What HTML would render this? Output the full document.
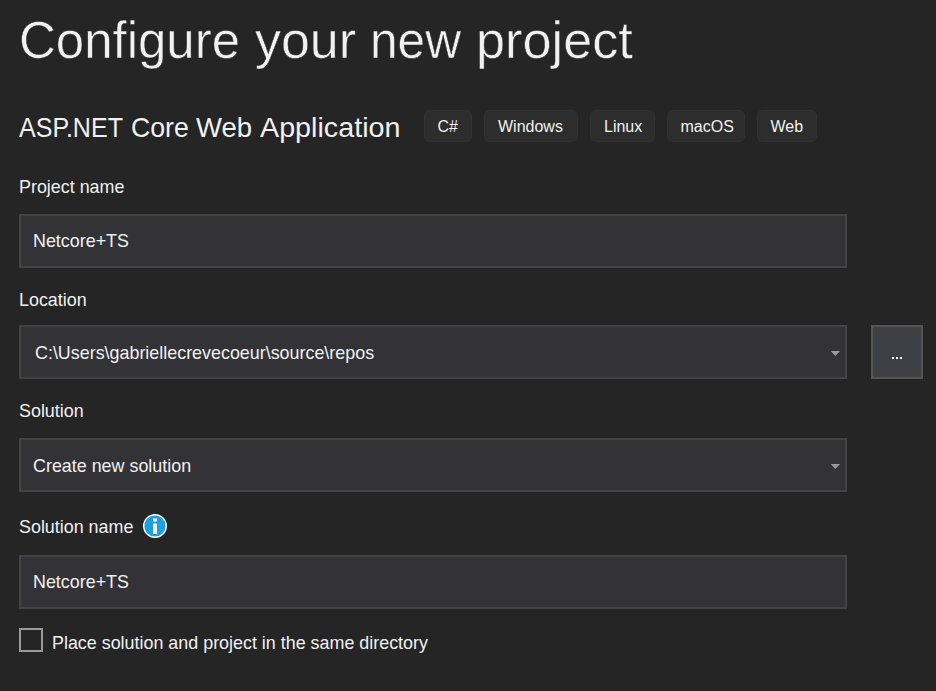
<!DOCTYPE html>
<html><head><meta charset="utf-8">
<style>
html,body{margin:0;padding:0;}
body{width:936px;height:691px;background:#252526;position:relative;overflow:hidden;font-family:"Liberation Sans",sans-serif;color:#f1f1f1;}
.t{position:absolute;white-space:pre;line-height:1;}
.w{transform-origin:0 0;}
.thin{-webkit-text-stroke:0.5px #252526;}
.box{position:absolute;box-sizing:border-box;border:2px solid #434346;background:#333337;}
.tag{position:absolute;top:110px;height:32px;background:#2d2d2d;border-radius:6px;box-shadow:inset 0 0 0 1px #313131;}
.arrow{position:absolute;width:0;height:0;border-left:4.5px solid transparent;border-right:4.5px solid transparent;border-top:5px solid #999999;}
</style></head><body>
<div class="t w thin" style="left:19.02px;top:15px;font-size:51.4px;transform:scaleX(0.992);">Configure</div>
<div class="t w thin" style="left:255px;top:15px;font-size:51.4px;transform:scaleX(1.011);">your</div>
<div class="t w thin" style="left:370.1px;top:15px;font-size:51.4px;transform:scaleX(0.966);">new</div>
<div class="t w thin" style="left:476.35px;top:15px;font-size:51.4px;transform:scaleX(1.017);">project</div>
<div class="t w" style="left:19px;top:113.5px;font-size:27.7px;transform:scaleX(0.9045);">ASP.NET</div>
<div class="t w" style="left:130.54px;top:113.5px;font-size:27.7px;transform:scaleX(0.964);">Core</div>
<div class="t w" style="left:196.4px;top:113.5px;font-size:27.7px;transform:scaleX(0.992);">Web</div>
<div class="t w" style="left:260px;top:113.5px;font-size:27.7px;transform:scaleX(1.037);">Application</div>

<div class="tag" style="left:424px;width:48px;"></div>
<div class="tag" style="left:484px;width:94px;"></div>
<div class="tag" style="left:590px;width:65px;"></div>
<div class="tag" style="left:667px;width:78px;"></div>
<div class="tag" style="left:757px;width:60px;"></div>
<div class="t" style="left:437.5px;top:118.5px;font-size:16px;">C#</div>
<div class="t" style="left:498px;top:118.5px;font-size:16px;">Windows</div>
<div class="t" style="left:604px;top:118.5px;font-size:16px;">Linux</div>
<div class="t" style="left:680.5px;top:118.5px;font-size:16px;">macOS</div>
<div class="t" style="left:770.5px;top:118.5px;font-size:16px;">Web</div>

<div class="t" style="left:19px;top:179px;font-size:17.9px;">Project name</div>
<div class="box" style="left:19px;top:214px;width:828px;height:54px;"></div>
<div class="t" style="left:33px;top:233px;font-size:17.9px;">Netcore+TS</div>

<div class="t" style="left:19px;top:292px;font-size:17.9px;">Location</div>
<div class="box" style="left:19px;top:325px;width:828px;height:54px;"></div>
<div class="t" style="left:35px;top:345px;font-size:17.9px;">C:\Users\gabriellecrevecoeur\source\repos</div>
<svg style="position:absolute;left:828px;top:348px;" width="16" height="12"><polygon points="2.7,3 12.1,3 7.4,8" fill="#999999"/></svg>
<div class="box" style="left:871px;top:325px;width:52px;height:54px;background:#3f3f46;border-color:#555555;"></div>
<div style="position:absolute;left:892px;top:357px;width:2px;height:2px;background:#fff;"></div>
<div style="position:absolute;left:896px;top:357px;width:2px;height:2px;background:#fff;"></div>
<div style="position:absolute;left:900px;top:357px;width:2px;height:2px;background:#fff;"></div>

<div class="t" style="left:19px;top:403px;font-size:17.9px;">Solution</div>
<div class="box" style="left:19px;top:438px;width:828px;height:54px;"></div>
<div class="t" style="left:33px;top:458px;font-size:17.9px;">Create new solution</div>
<svg style="position:absolute;left:828px;top:461px;" width="16" height="12"><polygon points="2.7,3 12.1,3 7.4,8" fill="#999999"/></svg>

<div class="t" style="left:19px;top:519px;font-size:17.9px;">Solution name</div>
<svg style="position:absolute;left:142px;top:513px;" width="26" height="26" viewBox="0 0 26 26">
<circle cx="13" cy="13" r="11.3" fill="#1ba1e2" stroke="#ffffff" stroke-width="1.4"/>
<rect x="11" y="5.5" width="4" height="3" fill="#fff"/>
<rect x="11" y="10.5" width="4" height="10.5" fill="#fff"/>
</svg>
<div class="box" style="left:19px;top:555px;width:828px;height:54px;"></div>
<div class="t" style="left:33px;top:574px;font-size:17.9px;">Netcore+TS</div>

<div class="box" style="left:19px;top:628px;width:24px;height:24px;background:transparent;border-color:#999999;"></div>
<div class="t" style="left:52px;top:635px;font-size:17.9px;">Place solution and project in the same directory</div>
</body></html>
